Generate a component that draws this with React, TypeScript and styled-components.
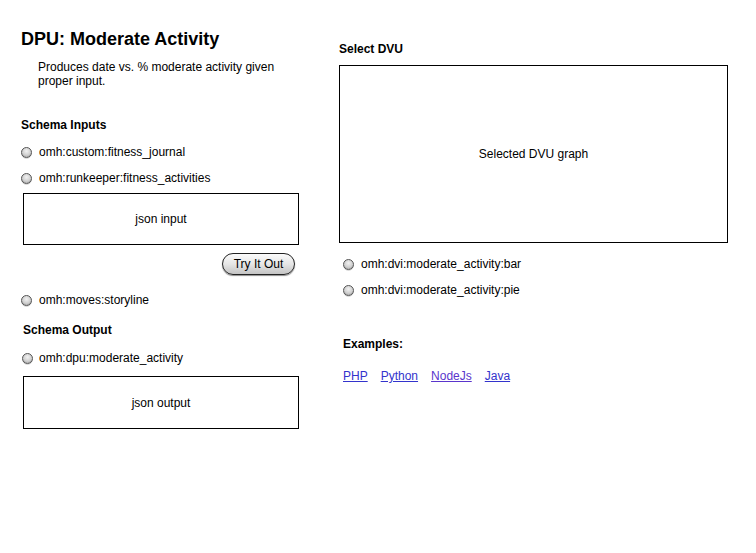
import React from "react";
import styled, { createGlobalStyle } from "styled-components";

const Global = createGlobalStyle`
  html, body { margin: 0; padding: 0; background: #fff; }
  body { font-family: "Liberation Sans", Arial, Helvetica, sans-serif; color: #000; font-size: 12px; }
`;

const Page = styled.div`
  display: flex;
  flex-direction: row;
  padding-left: 21px;
  width: 756px;
  height: 553px;
  box-sizing: border-box;
`;

const LeftCol = styled.div`
  width: 278px;
  display: flex;
  flex-direction: column;
  padding-top: 28px;
`;

const RightCol = styled.div`
  width: 389px;
  margin-left: 40px;
  display: flex;
  flex-direction: column;
  padding-top: 42px;
`;

const Title = styled.h1`
  margin: 0;
  font-size: 18px;
  line-height: 22px;
  font-weight: bold;
`;

const Description = styled.p`
  margin: 10px 0 0 17px;
  width: 245px;
  font-size: 12px;
  line-height: 14px;
`;

const Heading = styled.h2<{ $mt: number; $ml?: number }>`
  margin: ${(p) => p.$mt}px 0 0 ${(p) => p.$ml ?? 0}px;
  font-size: 12px;
  line-height: 14px;
  font-weight: bold;
`;

const RadioRow = styled.label<{ $mt: number; $ml?: number; $gap?: number }>`
  display: flex;
  align-items: center;
  height: 26px;
  margin: ${(p) => p.$mt}px 0 0 ${(p) => p.$ml ?? 0}px;
  gap: ${(p) => p.$gap ?? 7}px;
  font-size: 12px;
`;

const RadioDot = styled.span`
  display: inline-block;
  width: 9px;
  height: 9px;
  border-radius: 50%;
  border: 1px solid #555;
  background: radial-gradient(circle at 50% 35%, #f2f2f2 0%, #cfcfcf 55%, #9a9a9a 100%);
  box-shadow: 0 0.5px 0.5px rgba(0, 0, 0, 0.3);
  margin-top: 1px;
`;

const Panel = styled.div<{ $mt: number; $ml?: number; $w: number; $h: number }>`
  margin: ${(p) => p.$mt}px 0 0 ${(p) => p.$ml ?? 0}px;
  width: ${(p) => p.$w}px;
  height: ${(p) => p.$h}px;
  box-sizing: border-box;
  border: 1px solid #000;
  display: flex;
  align-items: center;
  justify-content: center;
  font-size: 12px;
`;

const ButtonRow = styled.div`
  display: flex;
  justify-content: flex-end;
  margin-top: 8px;
  padding-right: 4px;
`;

const PillButton = styled.button`
  height: 22px;
  width: 73px;
  box-sizing: border-box;
  border: 1px solid #222;
  border-radius: 11px;
  background: linear-gradient(#fbfbfb 0%, #e6e6e6 50%, #c4c4c4 100%);
  box-shadow: 0 1px 1px rgba(0, 0, 0, 0.45);
  font-family: "Liberation Sans", Arial, sans-serif;
  font-size: 12px;
  color: #000;
  padding: 0;
`;

const Links = styled.div`
  display: flex;
  gap: 13px;
  margin: 18px 0 0 4px;
  line-height: 14px;
`;

const Link = styled.a<{ $visited?: boolean }>`
  font-size: 12px;
  color: ${(p) => (p.$visited ? "#5a35cc" : "#3333cc")};
  text-decoration: underline;
  cursor: pointer;
`;

export default function App() {
  return (
    <>
      <Global />
      <Page>
        <LeftCol>
          <Title>DPU: Moderate Activity</Title>
          <Description>Produces date vs. % moderate activity given proper input.</Description>
          <Heading $mt={30}>Schema Inputs</Heading>
          <RadioRow $mt={7}>
            <RadioDot />
            omh:custom:fitness_journal
          </RadioRow>
          <RadioRow $mt={0}>
            <RadioDot />
            omh:runkeeper:fitness_activities
          </RadioRow>
          <Panel $mt={2} $ml={2} $w={276} $h={52}>json input</Panel>
          <ButtonRow>
            <PillButton>Try It Out</PillButton>
          </ButtonRow>
          <RadioRow $mt={12}>
            <RadioDot />
            omh:moves:storyline
          </RadioRow>
          <Heading $mt={10} $ml={2}>Schema Output</Heading>
          <RadioRow $mt={8} $ml={1} $gap={6}>
            <RadioDot />
            omh:dpu:moderate_activity
          </RadioRow>
          <Panel $mt={5} $ml={2} $w={276} $h={53}>json output</Panel>
        </LeftCol>
        <RightCol>
          <Heading $mt={0}>Select DVU</Heading>
          <Panel $mt={9} $w={389} $h={178}>Selected DVU graph</Panel>
          <RadioRow $mt={8} $ml={4}>
            <RadioDot />
            omh:dvi:moderate_activity:bar
          </RadioRow>
          <RadioRow $mt={0} $ml={4}>
            <RadioDot />
            omh:dvi:moderate_activity:pie
          </RadioRow>
          <Heading $mt={34} $ml={4}>Examples:</Heading>
          <Links>
            <Link>PHP</Link>
            <Link>Python</Link>
            <Link $visited>NodeJs</Link>
            <Link>Java</Link>
          </Links>
        </RightCol>
      </Page>
    </>
  );
}
